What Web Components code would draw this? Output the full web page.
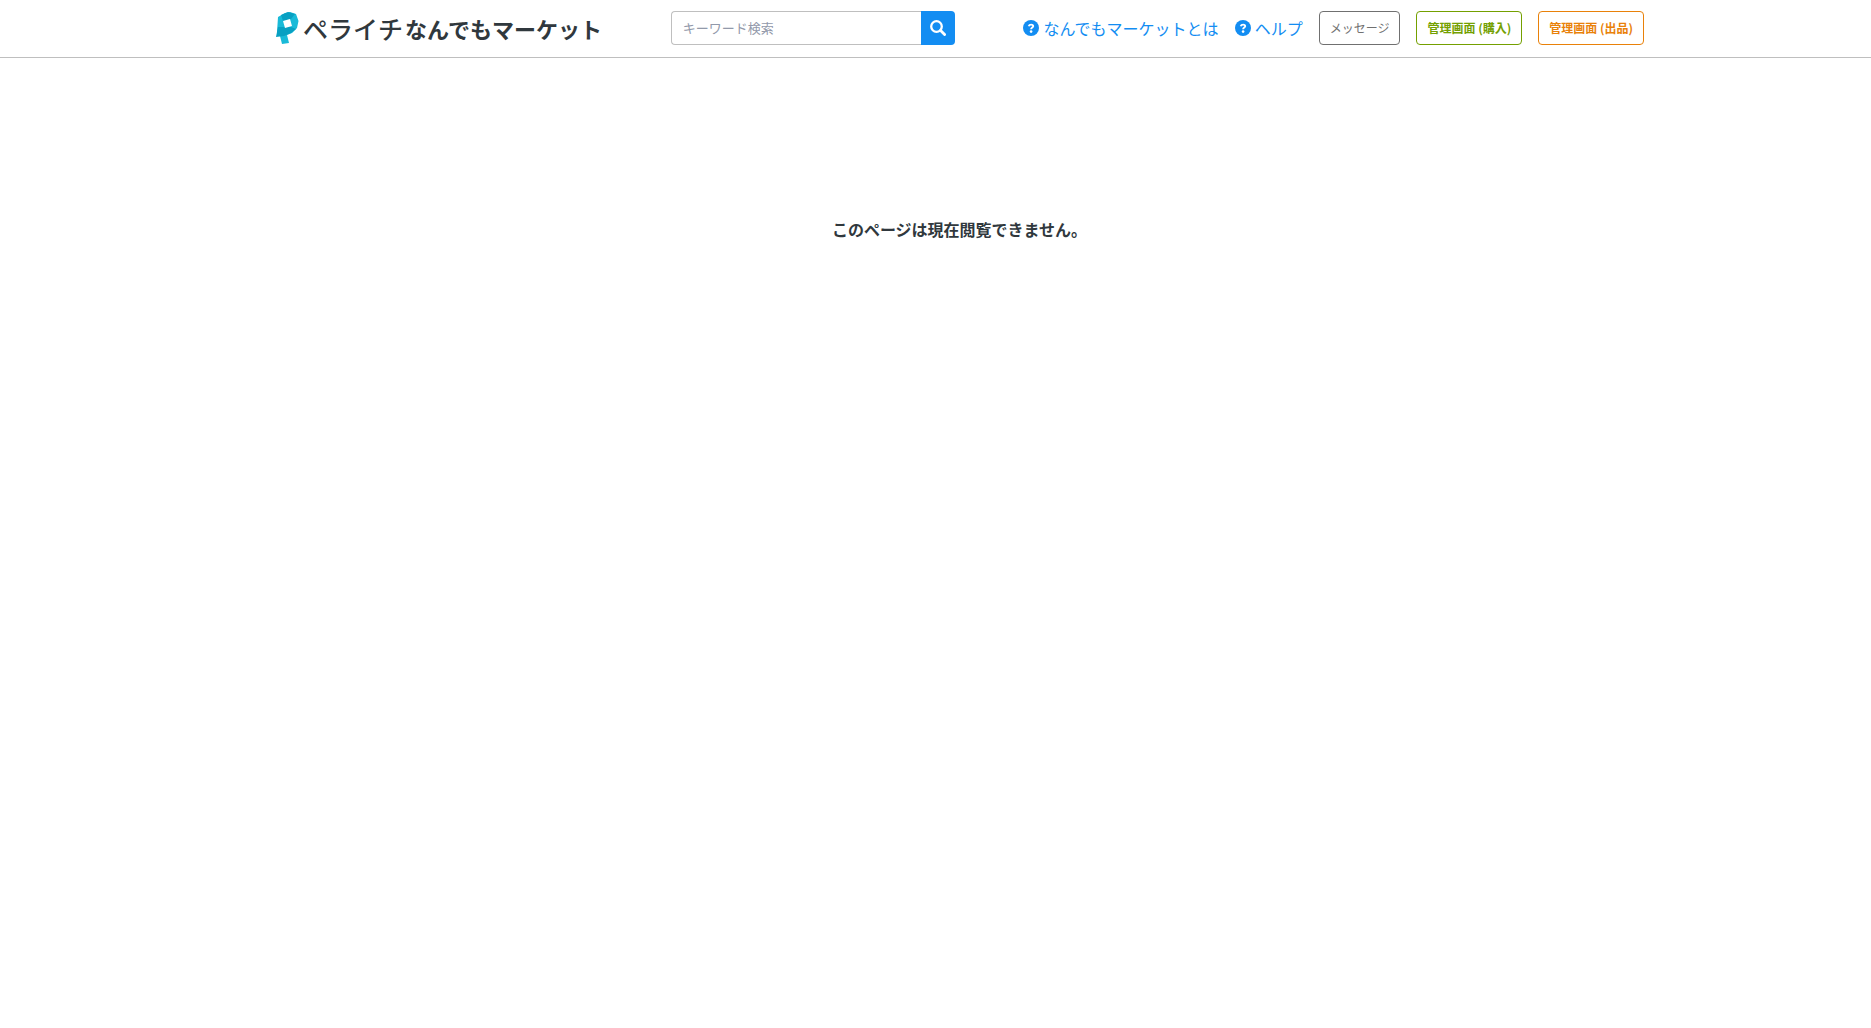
<!DOCTYPE html>
<html lang="ja">
<head>
<meta charset="utf-8">
<title>ペライチ なんでもマーケット</title>
<style>
body{margin:0;background:#fff;color:#30383d;font-family:"Noto Sans CJK JP",sans-serif;font-size:16px}
</style>
</head>
<body>
<market-page>
  <market-header slot="header">
    <market-logo></market-logo>
    <market-search></market-search>
    <market-nav>
      <help-link>なんでもマーケットとは</help-link>
      <help-link>ヘルプ</help-link>
      <nav-button>メッセージ</nav-button>
      <nav-button class="buy">管理画面 (購入)</nav-button>
      <nav-button class="sell">管理画面 (出品)</nav-button>
    </market-nav>
  </market-header>
  <page-notice>このページは現在閲覧できません。</page-notice>
</market-page>
<script>
function define(name, html) {
  customElements.define(name, class extends HTMLElement {
    constructor() {
      super();
      this.attachShadow({mode: 'open'}).innerHTML = html;
    }
  });
}
define('market-page', `<style>
:host{display:block;--gutter:48px}
main{padding-left:var(--gutter)}
</style><slot name="header"></slot><main><slot></slot></main>`);

define('market-header', `<style>
:host{display:block;border-bottom:1px solid #bfbfbf;padding-left:var(--gutter)}
header{box-sizing:border-box;display:flex;justify-content:space-between;align-items:center;max-width:1369px;height:57px;margin:0 auto;padding-bottom:2px}
</style><header><slot></slot></header>`);

define('market-logo', `<style>
:host{display:block}
a{display:flex;align-items:center;color:#30383d;text-decoration:none;white-space:nowrap;line-height:32px}
svg{width:24px;height:32px;margin-right:4px}
.brand{font-size:25px;font-weight:500;margin-right:2px}
.name{font-size:22px;font-weight:700}
</style><a href="#"><svg viewBox="-1 0 24 32" aria-hidden="true">
<path fill="#19bad8" d="M2 5 9 1 14 0 20 2 22.500 9 21 16 16 21 11 23 13 31 6 32 4 24 1 20Z"/>
<path fill="#08a0c2" d="M5 3 12 0 19 2 15 7 7 9Z"/>
<path fill="#08a0c2" d="M2 15 15 15 20 17 15 21 8 24 0 25Z"/>
<path fill="#fff" d="M7 9 14 7 16 14 9 16Z"/>
</svg><span class="brand">ペライチ</span><span class="name">なんでもマーケット</span></a>`);

define('market-search', `<style>
:host{display:block}
form{display:flex;height:34px;margin:0}
input{box-sizing:border-box;width:250px;border:1px solid #bfbfbf;border-right:0;border-radius:4px 0 0 4px;padding:0 11px;font:13px "Noto Sans CJK JP",sans-serif;color:#30383d;background:#fff;outline:0}
input::placeholder{color:#9299aa;opacity:1}
button{width:34px;border:0;padding:0;border-radius:0 4px 4px 0;background:#138df2;display:grid;place-items:center}
svg{width:16px;height:16px}
</style><form role="search"><input type="text" aria-label="キーワード検索" placeholder="キーワード検索"><button type="button" aria-label="検索"><svg viewBox="0 0 16 16" fill="none" stroke="#fff"><circle cx="6.5" cy="6.5" r="5.3" stroke-width="2.3"/><path d="m10.600 10.600 4 4" stroke-width="2.8" stroke-linecap="round"/></svg></button></form>`);

define('market-nav', `<style>
:host{display:block}
nav{display:flex;align-items:center;gap:16px}
</style><nav><slot></slot></nav>`);

define('help-link', `<style>
:host{display:block}
a{display:flex;align-items:center;gap:4px;color:#138df2;font-size:16px;line-height:24px;text-decoration:none;white-space:nowrap}
svg{width:16px;height:16px}
</style><a href="#"><svg viewBox="0 0 16 16" aria-hidden="true"><circle cx="8" cy="8" r="8" fill="#138df2"/><path d="M5.700 6.200C6.100 5 7 4.600 8.100 4.600c1.200 0 2.100.6 2.100 1.600 0 1.300-2.100 1.400-2.100 3" fill="none" stroke="#fff" stroke-width="1.900"/><circle cx="8.100" cy="11.600" r="1.300" fill="#fff"/></svg><span><slot></slot></span></a>`);

define('nav-button', `<style>
:host{display:block;--c:#707070}
:host(.buy){--c:#74a000;--w:700}
:host(.sell){--c:#e98109;--w:700}
button{box-sizing:border-box;height:34px;padding:0 10px 1px;border:1px solid var(--c);border-radius:4px;background:#fff;color:var(--c);font:var(--w,400) 12px "Noto Sans CJK JP",sans-serif;white-space:nowrap}
</style><button type="button"><slot></slot></button>`);

define('page-notice', `<style>
:host{display:block;padding-top:159px}
p{margin:0;font-size:16px;font-weight:700;line-height:24px;text-align:center}
</style><p><slot></slot></p>`);
</script>
</body>
</html>
